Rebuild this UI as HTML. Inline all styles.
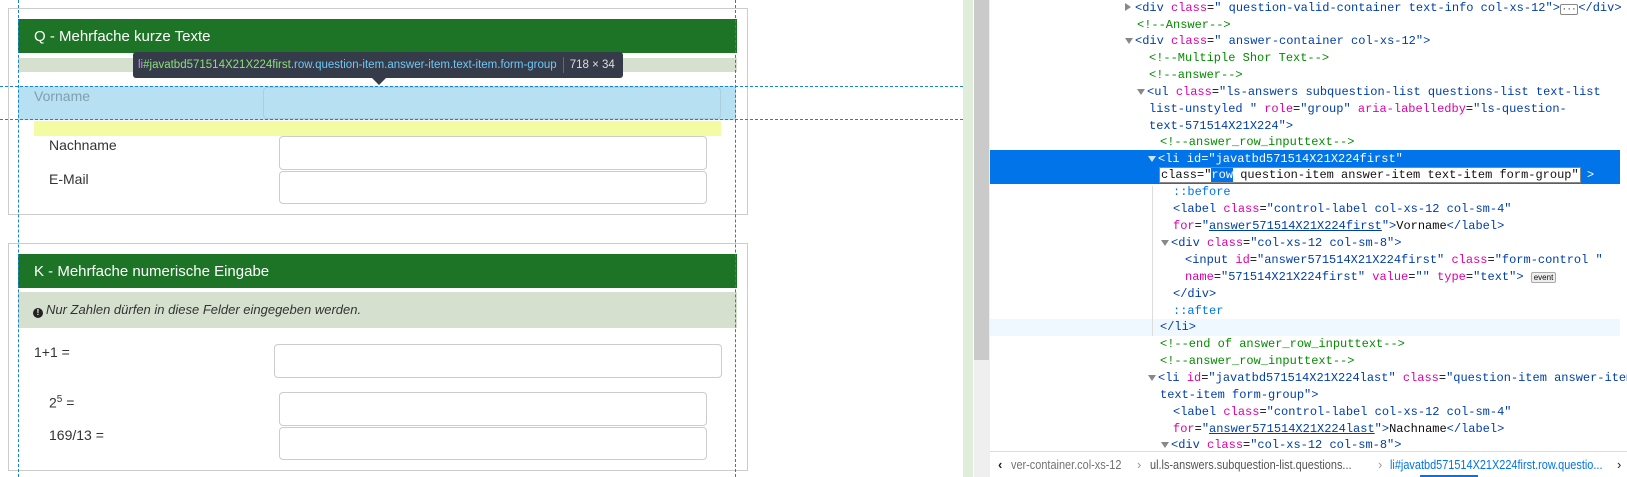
<!DOCTYPE html>
<html><head><meta charset="utf-8"><style>
*{margin:0;padding:0;box-sizing:border-box}
body{width:1627px;height:477px;overflow:hidden;background:#fff;position:relative;font-family:"Liberation Sans",sans-serif}
.a{position:absolute}
.box{position:absolute;border:1px solid #ccc;background:#fff}
.hdr{position:absolute;background:#1e7426;color:#fff;font-size:15px;padding-left:16px;display:flex;align-items:center}
.inp{position:absolute;border:1px solid #ccc;border-radius:4px;background:#fff}
.lbl{position:absolute;font-size:14px;color:#333}
.dv{position:absolute;border-left:1px dashed #1586c9}
.dh{position:absolute;border-top:1px dashed #1586c9}
.dt{position:absolute;left:990px;font-family:"Liberation Mono",monospace;font-size:12px;line-height:17px;white-space:pre;color:#0a0a0a}
.t{color:#003eaa}.n{color:#dd00a9}.v{color:#003eaa}.c{color:#058b00}.p{color:#0074e8}
.tri{display:inline-block;width:0;height:0;border-left:4px solid transparent;border-right:4px solid transparent;border-top:6px solid #888;margin-right:2px}
.trr{display:inline-block;width:0;height:0;border-top:4px solid transparent;border-bottom:4px solid transparent;border-left:6px solid #888;margin-right:4px}
.bc{position:absolute;transform:scaleX(0.84);transform-origin:left center}
</style></head><body>

<div class="box" style="left:8px;top:8px;width:740px;height:207px"></div>
<div class="hdr" style="left:18px;top:19px;width:719px;height:34px">Q - Mehrfache kurze Texte</div>
<div class="a" style="left:18px;top:58px;width:719px;height:14px;background:#d6e0cf"></div>
<div class="a" style="left:18px;top:86px;width:718px;height:34px;background:#b7e0f2"></div>
<div class="a" style="left:263px;top:87px;width:458px;height:32px;border:1px solid #a9cfe0;border-radius:4px"></div>
<div class="lbl" style="left:34px;top:88px;color:#7f9fae">Vorname</div>
<div class="a" style="left:34px;top:121px;width:687px;height:15px;background:#f3fca3"></div>
<div class="lbl" style="left:49px;top:137px">Nachname</div>
<div class="inp" style="left:279px;top:136px;width:428px;height:34px"></div>
<div class="lbl" style="left:49px;top:171px">E-Mail</div>
<div class="inp" style="left:279px;top:171px;width:428px;height:33px"></div>

<div class="a" style="left:133px;top:52px;width:490px;height:26px;background:#353b48;border-radius:3px;font-size:11.5px;line-height:26px;padding-left:5px;white-space:nowrap;color:#ddd">
<span style="color:#c48bf2">li</span><span style="color:#8ae07a">#javatbd571514X21X224first</span><span style="color:#6fc7f5">.row.question-item.answer-item.text-item.form-group</span><span style="display:inline-block;width:1px;height:16px;background:#667;vertical-align:middle;margin:0 6px"></span>718 × 34</div>
<div class="a" style="left:372px;top:78px;width:0;height:0;border-left:7px solid transparent;border-right:7px solid transparent;border-top:7px solid #353b48"></div>

<div class="box" style="left:8px;top:243px;width:740px;height:228px"></div>
<div class="hdr" style="left:18px;top:254px;width:719px;height:34px">K - Mehrfache numerische Eingabe</div>
<div class="a" style="left:18px;top:292px;width:719px;height:36px;background:#d6e0cf;font-size:13px;font-style:italic;color:#333;line-height:36px;padding-left:15px"><span style="display:inline-block;width:10px;height:10px;border-radius:50%;background:#222;color:#fff;font-size:8px;line-height:10px;text-align:center;font-style:normal;font-weight:bold;vertical-align:-1px;margin-right:3px">!</span>Nur Zahlen dürfen in diese Felder eingegeben werden.</div>
<div class="lbl" style="left:34px;top:344px">1+1 =</div>
<div class="inp" style="left:274px;top:344px;width:448px;height:34px"></div>
<div class="lbl" style="left:49px;top:394px">2<sup style="font-size:10px">5</sup> =</div>
<div class="inp" style="left:279px;top:392px;width:428px;height:34px"></div>
<div class="lbl" style="left:49px;top:427px">169/13 =</div>
<div class="inp" style="left:279px;top:427px;width:428px;height:33px"></div>

<div class="dv" style="left:18px;top:0;height:477px"></div>
<div class="dv" style="left:735px;top:0;height:477px"></div>
<div class="dh" style="left:0;top:86px;width:973px"></div>
<div class="dh" style="left:0;top:119px;width:973px"></div>

<div class="a" style="left:963px;top:0;width:10px;height:477px;background:#e0eddb"></div>
<div class="a" style="left:974px;top:0;width:16px;height:477px;background:#efefef"></div>
<div class="a" style="left:974px;top:0;width:15px;height:360px;background:#cacaca"></div>

<div class="a" style="left:990px;top:150px;width:630px;height:34px;background:#0074e8"></div>
<div class="a" style="left:990px;top:319px;width:630px;height:17px;background:#f0f8ff"></div>
<div class="a" style="left:1152px;top:186px;width:1px;height:150px;background:#ddd"></div>

<div class="dt" style="top:0;left:1125px"><span class="trr"></span><span class="t">&lt;div</span> <span class="n">class</span>=<span class="v">" question-valid-container text-info col-xs-12"</span><span class="t">&gt;</span><span style="border:1px solid #888;border-radius:2px;font-size:8px;padding:0 1px">···</span><span class="t">&lt;/div&gt;</span></div>
<div class="dt" style="top:17px;left:1137px"><span class="c">&lt;!--Answer--&gt;</span></div>
<div class="dt" style="top:33px;left:1125px"><span class="tri"></span><span class="t">&lt;div</span> <span class="n">class</span>=<span class="v">" answer-container col-xs-12"</span><span class="t">&gt;</span></div>
<div class="dt" style="top:50px;left:1149px"><span class="c">&lt;!--Multiple Shor Text--&gt;</span></div>
<div class="dt" style="top:67px;left:1149px"><span class="c">&lt;!--answer--&gt;</span></div>
<div class="dt" style="top:84px;left:1137px"><span class="tri"></span><span class="t">&lt;ul</span> <span class="n">class</span>=<span class="v">"ls-answers subquestion-list questions-list text-list</span></div>
<div class="dt" style="top:101px;left:1149px"><span class="v">list-unstyled "</span> <span class="n">role</span>=<span class="v">"group"</span> <span class="n">aria-labelledby</span>=<span class="v">"ls-question-</span></div>
<div class="dt" style="top:118px;left:1149px"><span class="v">text-571514X21X224"</span><span class="t">&gt;</span></div>
<div class="dt" style="top:134px;left:1160px"><span class="c">&lt;!--answer_row_inputtext--&gt;</span></div>
<div class="dt" style="top:151px;left:1148px;color:#fff"><span class="tri" style="border-top-color:#cfe3fa"></span>&lt;li id="javatbd571514X21X224first"</div>
<div class="dt" style="top:167px;left:1160px;color:#fff"><span style="background:#fff;color:#111;outline:1px solid #888;padding:0 1px">class="<span style="background:#0074e8;color:#fff">row</span> question-item answer-item text-item form-group"</span> &gt;</div>
<div class="dt" style="top:184px;left:1173px"><span class="p">::before</span></div>
<div class="dt" style="top:201px;left:1173px"><span class="t">&lt;label</span> <span class="n">class</span>=<span class="v">"control-label col-xs-12 col-sm-4"</span></div>
<div class="dt" style="top:218px;left:1173px"><span class="n">for</span>=<span class="v">"<u>answer571514X21X224first</u>"</span><span class="t">&gt;</span>Vorname<span class="t">&lt;/label&gt;</span></div>
<div class="dt" style="top:235px;left:1161px"><span class="tri"></span><span class="t">&lt;div</span> <span class="n">class</span>=<span class="v">"col-xs-12 col-sm-8"</span><span class="t">&gt;</span></div>
<div class="dt" style="top:252px;left:1185px"><span class="t">&lt;input</span> <span class="n">id</span>=<span class="v">"answer571514X21X224first"</span> <span class="n">class</span>=<span class="v">"form-control "</span></div>
<div class="dt" style="top:269px;left:1185px"><span class="n">name</span>=<span class="v">"571514X21X224first"</span> <span class="n">value</span>=<span class="v">""</span> <span class="n">type</span>=<span class="v">"text"</span><span class="t">&gt;</span> <span style="font-family:'Liberation Sans',sans-serif;font-size:8px;border:1px solid #aaa;background:#eee;border-radius:2px;padding:0 2px">event</span></div>
<div class="dt" style="top:286px;left:1173px"><span class="t">&lt;/div&gt;</span></div>
<div class="dt" style="top:303px;left:1173px"><span class="p">::after</span></div>
<div class="dt" style="top:319px;left:1160px"><span class="t">&lt;/li&gt;</span></div>
<div class="dt" style="top:336px;left:1160px"><span class="c">&lt;!--end of answer_row_inputtext--&gt;</span></div>
<div class="dt" style="top:353px;left:1160px"><span class="c">&lt;!--answer_row_inputtext--&gt;</span></div>
<div class="dt" style="top:370px;left:1148px"><span class="tri"></span><span class="t">&lt;li</span> <span class="n">id</span>=<span class="v">"javatbd571514X21X224last"</span> <span class="n">class</span>=<span class="v">"question-item answer-item</span></div>
<div class="dt" style="top:387px;left:1160px"><span class="v">text-item form-group"</span><span class="t">&gt;</span></div>
<div class="dt" style="top:404px;left:1173px"><span class="t">&lt;label</span> <span class="n">class</span>=<span class="v">"control-label col-xs-12 col-sm-4"</span></div>
<div class="dt" style="top:421px;left:1173px"><span class="n">for</span>=<span class="v">"<u>answer571514X21X224last</u>"</span><span class="t">&gt;</span>Nachname<span class="t">&lt;/label&gt;</span></div>
<div class="dt" style="top:437px;left:1161px"><span class="tri"></span><span class="t">&lt;div</span> <span class="n">class</span>=<span class="v">"col-xs-12 col-sm-8"</span><span class="t">&gt;</span></div>

<div class="a" style="left:990px;top:451px;width:637px;height:26px;background:#fff;border-top:1px solid #ddd;font-size:13px;line-height:25px;white-space:nowrap;color:#737373;overflow:hidden">
<span style="position:absolute;left:8px;color:#222;font-weight:bold">&lsaquo;</span>
<span class="bc" style="left:21px">ver-container.col-xs-12</span>
<span style="position:absolute;left:147px;color:#999">›</span>
<span class="bc" style="left:160px;color:#555">ul.ls-answers.subquestion-list.questions...</span>
<span style="position:absolute;left:388px;color:#999">›</span>
<span class="bc" style="left:400px;color:#0074e8">li#javatbd571514X21X224first.row.questio...</span>
<span style="position:absolute;left:430px;top:23px;width:58px;height:2px;background:#0074e8"></span>
<span style="position:absolute;left:627px;color:#222">›</span>
</div>
</body></html>
